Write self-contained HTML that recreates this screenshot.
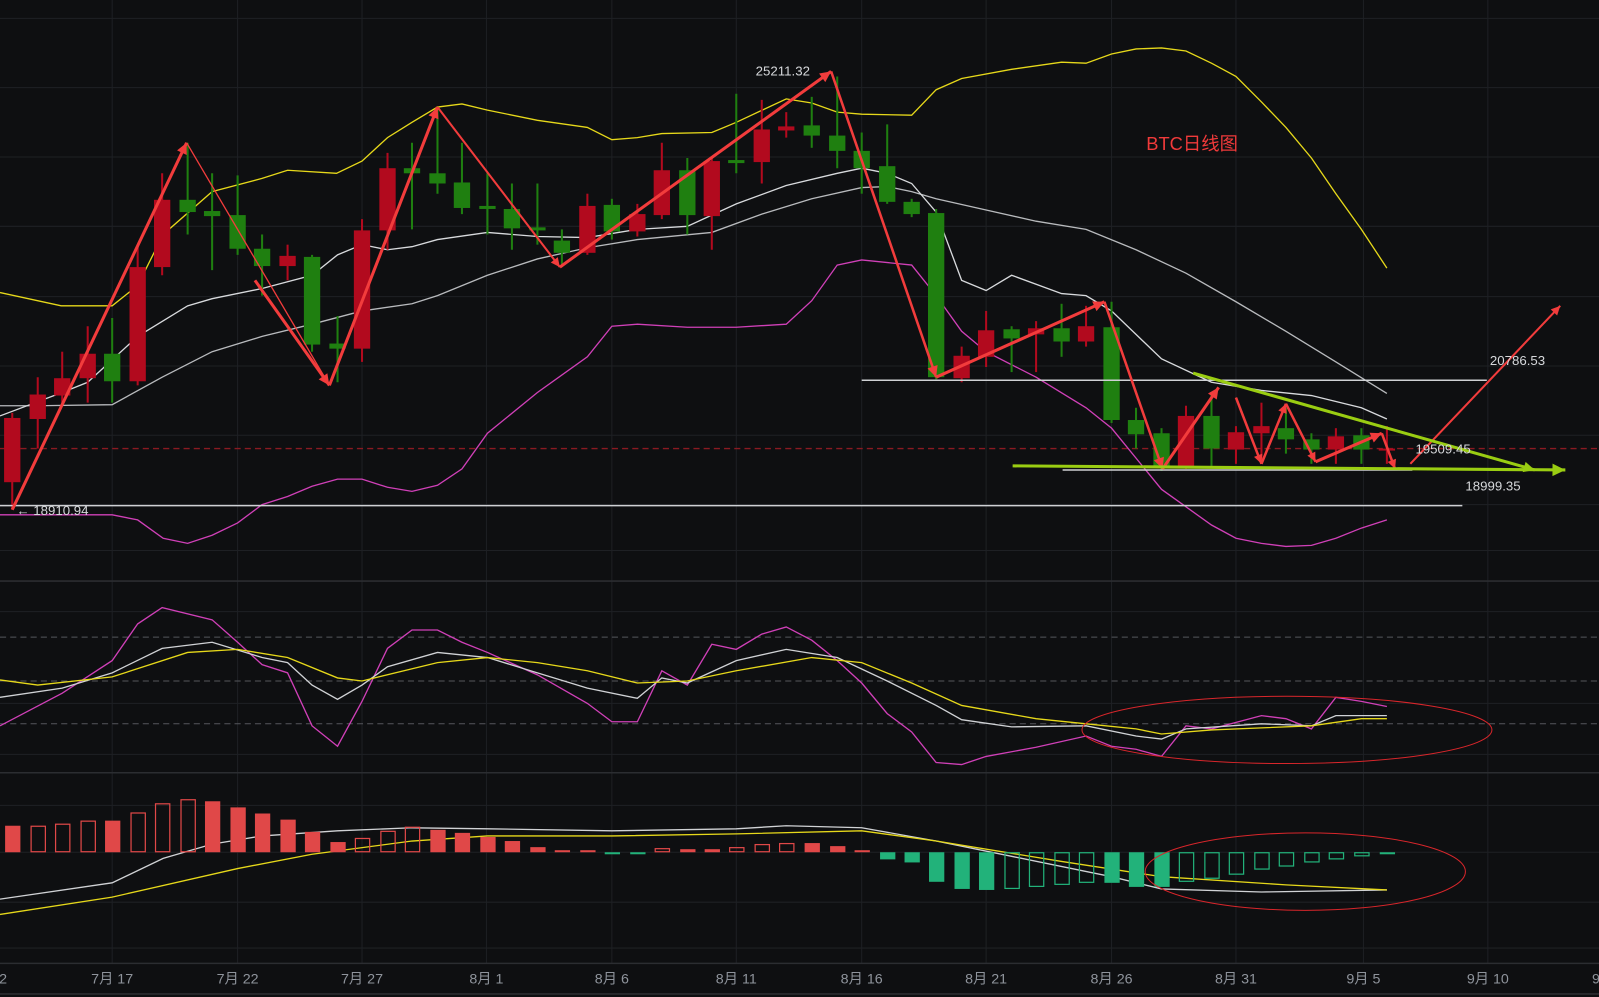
<!DOCTYPE html>
<html><head><meta charset="utf-8"><style>
html,body{margin:0;padding:0;background:#0e0f11;overflow:hidden}
svg{display:block}
text{font-family:"Liberation Sans","Noto Sans CJK SC",sans-serif}
</style></head><body>
<svg id="s" width="1599" height="997" viewBox="0 0 1568 978" preserveAspectRatio="none" xmlns="http://www.w3.org/2000/svg">
<rect width="1568" height="978" fill="#0e0f11"/>
<g id="grid" stroke="#1e2024" stroke-width="1"></g>
<g stroke="#2b2d31" stroke-width="1.5">
<line x1="0" y1="570" x2="1568" y2="570"/><line x1="0" y1="758" x2="1568" y2="758"/>
<line x1="0" y1="945" x2="1568" y2="945"/><line x1="0" y1="975" x2="1568" y2="975"/>
</g>
<g stroke="#55575c" stroke-dasharray="6,4" stroke-width="1">
<line x1="0" y1="625" x2="1568" y2="625"/><line x1="0" y1="668" x2="1568" y2="668"/><line x1="0" y1="710" x2="1568" y2="710"/>
</g>
<line x1="0" y1="440" x2="1568" y2="440" stroke="#8a1a22" stroke-dasharray="6,4" stroke-width="1.3"/>
<g id="lines" fill="none" stroke-width="1.3"></g>
<g id="candles"></g>
<g id="bars"></g>
<g stroke="#cfd1d4" stroke-width="1.5">
<line x1="845" y1="373" x2="1458" y2="373"/><line x1="0" y1="496" x2="1434" y2="496"/><line x1="1042" y1="461" x2="1385" y2="461"/>
</g>
<g id="arrows"></g>
<ellipse cx="1262" cy="716" rx="201" ry="33" fill="none" stroke="#d8262b" stroke-width="1"/>
<ellipse cx="1280" cy="855" rx="157" ry="38" fill="none" stroke="#d8262b" stroke-width="1"/>
<g fill="#d6d8db" font-size="13">
<text x="741" y="74">25211.32</text>
<text x="1461" y="358" font-family="Liberation Mono,monospace">20786.53</text>
<text x="1388" y="445" font-family="Liberation Mono,monospace">19509.45</text>
<text x="1437" y="481" font-family="Liberation Mono,monospace">18999.35</text>
<text x="16" y="505">← 18910.94</text>
</g>
<text x="1124" y="147" fill="#f03a3a" font-size="18">BTC日线图</text>
<g fill="#8f949c" font-size="14" text-anchor="middle">
<text x="3" y="965">2</text><text x="110" y="965">7月 17</text><text x="233" y="965">7月 22</text><text x="355" y="965">7月 27</text>
<text x="477" y="965">8月 1</text><text x="600" y="965">8月 6</text><text x="722" y="965">8月 11</text><text x="845" y="965">8月 16</text>
<text x="967" y="965">8月 21</text><text x="1090" y="965">8月 26</text><text x="1212" y="965">8月 31</text><text x="1337" y="965">9月 5</text>
<text x="1459" y="965">9月 10</text><text x="1565" y="965">9</text>
</g>
</svg>
<script>
const NS="http://www.w3.org/2000/svg";
function el(p,t,a){const e=document.createElementNS(NS,t);for(const k in a)e.setAttribute(k,a[k]);document.getElementById(p).appendChild(e);return e;}
[110,233,355,477,600,722,845,967,1090,1212,1337,1459].forEach(x=>el("grid","line",{x1:x,y1:0,x2:x,y2:945}));
[18,86,154,222,291,359,427,495,540,600,690,740,790,836,885,930].forEach(y=>el("grid","line",{x1:0,y1:y,x2:1568,y2:y}));
function pl(pts,c,w){el("lines","polyline",{points:pts.map(p=>p.join(",")).join(" "),stroke:c,"stroke-width":w||1.3});}
pl([[0,287],[60,300],[110,300],[135,280],[160,230],[208,188],[257,175],[282,167],[330,170],[355,158],[380,135],[404,120],[429,105],[453,102],[478,108],[527,118],[576,125],[600,137],[625,135],[649,131],[698,130],[722,120],[771,97],[796,101],[821,110],[845,112],[894,113],[918,88],[943,77],[992,68],[1041,61],[1065,62],[1090,53],[1114,48],[1139,47],[1163,50],[1188,62],[1212,75],[1237,100],[1261,125],[1286,155],[1310,190],[1335,225],[1360,263]],"#e6d81a");
pl([[0,398],[37,398],[110,397],[159,370],[208,345],[257,330],[306,318],[355,305],[404,298],[429,290],[478,270],[527,254],[576,243],[625,235],[698,228],[747,210],[796,195],[845,184],[870,183],[894,188],[918,195],[967,206],[1016,217],[1065,225],[1114,245],[1163,268],[1212,296],[1261,325],[1310,355],[1360,386]],"#b8babd");
pl([[0,408],[61,385],[86,375],[135,330],[184,300],[208,293],[257,283],[306,270],[331,250],[355,240],[380,245],[404,242],[429,235],[478,228],[527,232],[576,233],[625,225],[674,222],[722,200],[771,182],[821,170],[845,165],[870,170],[894,180],[918,208],[943,275],[967,285],[992,270],[1041,288],[1065,290],[1090,305],[1139,352],[1188,375],[1237,383],[1286,388],[1335,400],[1360,411]],"#d8dadd");
pl([[0,505],[110,505],[135,510],[160,528],[184,533],[208,525],[233,513],[257,495],[282,487],[306,477],[331,470],[355,470],[380,478],[404,482],[429,476],[453,460],[478,425],[527,385],[576,350],[600,320],[625,318],[674,321],[722,321],[771,318],[796,295],[821,260],[845,255],[894,260],[918,290],[943,325],[967,345],[1016,370],[1065,400],[1090,420],[1139,480],[1188,515],[1212,528],[1237,533],[1261,536],[1286,535],[1310,528],[1335,518],[1360,510]],"#d040b8");
pl([[0,712],[61,680],[110,648],[135,612],[159,596],[208,608],[233,630],[257,652],[282,660],[306,712],[331,732],[355,688],[380,636],[404,618],[429,618],[453,630],[478,640],[527,662],[576,690],[600,708],[625,708],[649,658],[674,672],[698,632],[722,637],[747,622],[771,615],[796,628],[821,648],[845,670],[870,700],[894,718],[918,748],[943,750],[967,742],[1016,733],[1065,722],[1090,732],[1114,735],[1139,742],[1163,712],[1188,715],[1237,702],[1261,705],[1286,715],[1310,684],[1335,688],[1360,693]],"#d040b8");
pl([[0,684],[61,675],[110,660],[159,636],[208,630],[257,645],[282,650],[306,672],[331,686],[355,672],[380,654],[429,640],[478,645],[527,660],[576,675],[625,685],[649,665],[674,670],[722,648],[771,637],[821,645],[870,668],[918,692],[943,706],[992,713],[1065,712],[1114,722],[1139,725],[1163,715],[1237,710],[1286,712],[1310,702],[1360,702]],"#d0d2d5");
pl([[0,667],[37,672],[110,664],[184,640],[233,637],[282,645],[331,665],[355,668],[429,650],[478,645],[527,650],[576,658],[625,670],[674,668],[722,658],[796,645],[845,650],[894,670],[943,692],[1016,705],[1065,710],[1114,715],[1139,720],[1188,716],[1237,714],[1286,712],[1335,705],[1360,705]],"#e6d81a");
pl([[0,882],[110,866],[160,842],[208,828],[257,820],[331,815],[404,812],[478,813],[600,815],[722,813],[771,810],[845,812],[918,825],[992,840],[1090,860],[1139,872],[1237,875],[1360,873]],"#d0d2d5");
pl([[0,897],[110,880],[233,852],[306,838],[404,825],[478,820],[600,820],[722,818],[845,815],[918,825],[1041,845],[1139,860],[1261,868],[1360,873]],"#e6d81a");
const R="#b20a1e",G="#1f7f10";
const c=[[12,410,473,R,405,500],[37,387,411,R,370,440],[61,371,388,R,345,395],[86,347,371,R,320,395],[110,347,374,G,312,395],[135,262,374,R,240,378],[159,196,262,R,170,270],[184,196,208,G,140,230],[208,207,212,G,170,265],[233,211,244,G,172,250],[257,244,261,G,230,290],[282,251,261,R,240,275],[306,252,338,G,250,345],[331,337,342,G,310,375],[355,226,342,R,215,355],[380,165,226,R,150,245],[404,165,170,G,140,225],[429,170,180,G,105,190],[453,179,204,G,140,210],[478,202,205,G,170,230],[502,205,224,G,180,245],[527,223,226,G,180,240],[551,236,248,G,225,262],[576,202,248,R,190,250],[600,201,227,G,195,235],[625,210,227,R,200,232],[649,167,211,R,140,215],[674,167,211,G,155,230],[698,158,212,R,155,245],[722,157,160,G,92,170],[747,127,159,R,98,180],[771,124,128,R,110,135],[796,123,133,G,95,145],[821,133,148,G,75,165],[845,148,165,G,130,190],[870,163,198,G,122,200],[894,198,210,G,195,213],[918,209,370,G,205,372],[943,349,371,R,340,375],[967,324,350,R,305,360],[992,323,332,G,320,365],[1016,322,328,R,315,365],[1041,322,335,G,298,350],[1065,320,335,R,300,340],[1090,321,412,G,296,415],[1114,412,426,G,400,440],[1139,425,458,G,420,462],[1163,408,458,R,398,460],[1188,408,440,G,385,457],[1212,424,441,R,418,455],[1237,418,425,R,395,455],[1261,420,431,G,400,445],[1286,431,441,G,425,455],[1310,428,441,R,420,455],[1335,427,441,G,420,455],[1360,440,442,R,418,455]];
c.forEach(a=>{el("candles","line",{x1:a[0],y1:a[4],x2:a[0],y2:a[5],stroke:a[3],"stroke-width":2});el("candles","rect",{x:a[0]-8,y:a[1],width:16,height:Math.max(2,a[2]-a[1]),fill:a[3]});});
const BR="#e04848",BG="#22b27a";
const b=[[12,810,1],[37,810,0],[61,808,0],[86,805,0],[110,805,1],[135,797,0],[159,788,0],[184,784,0],[208,786,1],[233,792,1],[257,798,1],[282,804,1],[306,816,1],[331,826,1],[355,822,0],[380,815,0],[404,811,0],[429,814,1],[453,817,1],[478,821,1],[502,825,1],[527,831,1],[551,834,1],[576,834,1],[649,832,0],[674,833,1],[698,833,1],[722,831,0],[747,828,0],[771,827,0],[796,827,1],[821,830,1],[845,834,1]];
b.forEach(a=>{el("bars","rect",a[2]?{x:a[0]-7,y:a[1],width:15,height:836-a[1],fill:BR}:{x:a[0]-6.5,y:a[1]+.5,width:14,height:835-a[1],fill:"none",stroke:BR,"stroke-width":1.2});});
const g=[[600,838,1],[625,838,1],[870,843,1],[894,846,1],[918,865,1],[943,872,1],[967,873,1],[992,872,0],[1016,870,0],[1041,868,0],[1065,866,0],[1090,866,1],[1114,870,1],[1139,870,1],[1163,865,0],[1188,862,0],[1212,858,0],[1237,853,0],[1261,850,0],[1286,846,0],[1310,843,0],[1335,840,0],[1360,838,1]];
g.forEach(a=>{el("bars","rect",a[2]?{x:a[0]-7,y:836,width:15,height:a[1]-836,fill:BG}:{x:a[0]-6.5,y:836.5,width:14,height:a[1]-837,fill:"none",stroke:BG,"stroke-width":1.2});});
function arrow(x1,y1,x2,y2,col,w,hs){el("arrows","line",{x1,y1,x2,y2,stroke:col,"stroke-width":w});if(hs){const a=Math.atan2(y2-y1,x2-x1),l=hs,s=0.45;el("arrows","polygon",{points:`${x2},${y2} ${x2-l*Math.cos(a-s)},${y2-l*Math.sin(a-s)} ${x2-l*Math.cos(a+s)},${y2-l*Math.sin(a+s)}`,fill:col});}}
const A="#f23c3c";
arrow(12,500,183,140,A,3,12);arrow(183,140,323,378,A,1.3,0);arrow(250,275,323,378,A,3,12);
arrow(323,378,429,105,A,3,12);arrow(429,105,549,262,A,2,10);arrow(549,262,815,70,A,3,12);
arrow(815,70,918,370,A,2.5,12);arrow(918,370,1083,296,A,3,12);arrow(1083,296,1140,460,A,2.5,12);
arrow(1140,460,1195,380,A,3,12);arrow(1212,390,1237,455,A,2.5,10);arrow(1237,455,1261,396,A,2.5,10);
arrow(1261,396,1290,453,A,2.5,10);arrow(1290,453,1355,425,A,3,12);arrow(1355,425,1368,460,A,2.5,10);
arrow(1383,455,1530,300,A,2,10);
arrow(993,457,1535,461,"#9acd12",3,14);arrow(1170,366,1505,461,"#9acd12",3,12);
</script>
</body></html>
